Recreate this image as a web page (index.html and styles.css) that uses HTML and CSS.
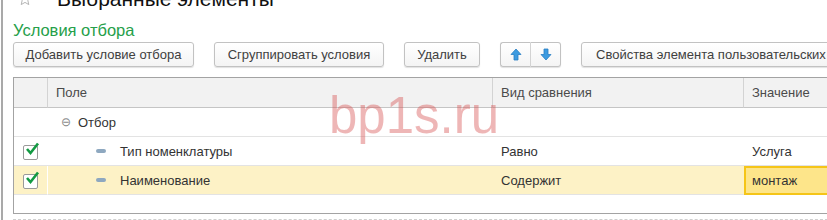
FILE: index.html
```html
<!DOCTYPE html>
<html lang="ru">
<head>
<meta charset="utf-8">
<link rel="stylesheet" href="styles.css">
</head>
<body>
<div class="frame">
  <div class="title-row">
    <svg class="star" width="14" height="14" viewBox="0 0 14 14"><path d="M7 1 L8.8 5 L13 5.4 L9.8 8.3 L10.8 12.6 L7 10.4 L3.2 12.6 L4.2 8.3 L1 5.4 L5.2 5 Z" fill="none" stroke="#b5b5b5" stroke-width="1"/></svg>
    <span class="title">Выбранные элементы</span>
  </div>
  <div class="group-title">Условия отбора</div>
  <div class="toolbar">
    <button class="btn b1">Добавить условие отбора</button>
    <button class="btn b2">Сгруппировать условия</button>
    <button class="btn b3">Удалить</button>
    <div class="btn-pair">
      <button class="btn half"><svg width="12" height="13" viewBox="0 0 12 13"><path d="M6 1 L11 6.5 L8 6.5 L8 12 L4 12 L4 6.5 L1 6.5 Z" fill="#3d9be0" stroke="#2a7fc4" stroke-width="0.8"/></svg></button>
      <button class="btn half"><svg width="12" height="13" viewBox="0 0 12 13"><path d="M6 12 L11 6.5 L8 6.5 L8 1 L4 1 L4 6.5 L1 6.5 Z" fill="#3d9be0" stroke="#2a7fc4" stroke-width="0.8"/></svg></button>
    </div>
    <button class="btn b5"><span class="b5-text">Свойства элемента пользовательских настроек</span></button>
  </div>
  <div class="grid">
    <div class="hc c0"></div>
    <div class="hc c1">Поле</div>
    <div class="hc c2">Вид сравнения</div>
    <div class="hc c3">Значение</div>

    <div class="cell c0"></div>
    <div class="cell c1 lvl0"><span class="collapse">⊖</span>Отбор</div>
    <div class="cell c2"></div>
    <div class="cell c3"></div>

    <div class="cell c0"><span class="chk"><svg width="16" height="14" viewBox="0 0 16 14"><path d="M3 7 L6.5 11 L14 1.5" fill="none" stroke="#139a43" stroke-width="2.6"/></svg></span></div>
    <div class="cell c1 lvl1"><span class="dash"></span>Тип номенклатуры</div>
    <div class="cell c2">Равно</div>
    <div class="cell c3">Услуга</div>

    <div class="cell c0 sel sel0"><span class="chk"><svg width="16" height="14" viewBox="0 0 16 14"><path d="M3 7 L6.5 11 L14 1.5" fill="none" stroke="#139a43" stroke-width="2.6"/></svg></span></div>
    <div class="cell c1 lvl1 sel"><span class="dash"></span>Наименование</div>
    <div class="cell c2 sel">Содержит</div>
    <div class="cell c3 sel cur">монтаж</div>

    <div class="blank"></div>
  </div>
  <div class="dashed"></div>
  <div class="watermark">bp1s.ru</div>
</div>
</body>
</html>
```
FILE: styles.css
```css
html, body {
  margin: 0;
  padding: 0;
  background: #fff;
  overflow: hidden;
  width: 827px;
  height: 220px;
}
.frame {
  position: relative;
  margin-left: 1px;
  border-left: 2px solid #a9a9a9;
  height: 220px;
  padding-left: 10px;
  font-family: Arial, "Liberation Sans", sans-serif;
  font-size: 13px;
  color: #404040;
  overflow: hidden;
}
.title-row {
  display: flex;
  align-items: center;
  height: 16px;
  margin-top: -9px;
  gap: 25px;
  padding-left: 5px;
}
.star { flex: none; }
.title {
  font-size: 21px;
  color: #111;
  line-height: 16px;
  white-space: nowrap;
}
.group-title {
  margin-top: 14px;
  font-size: 16.5px;
  line-height: 18px;
  color: #26a04a;
}
.toolbar {
  display: flex;
  margin-top: 3px;
  height: 25px;
  white-space: nowrap;
}
.btn {
  font-family: Arial, "Liberation Sans", sans-serif;
  font-size: 13px;
  color: #404040;
  height: 25px;
  border: 1px solid #c2c2c2;
  border-radius: 3px;
  background: linear-gradient(#ffffff, #f4f4f4);
  box-shadow: 0 1px 1px rgba(0,0,0,0.12);
  padding: 0;
  margin: 0;
  flex: none;
}
.b1 { width: 181px; }
.b2 { width: 170px; margin-left: 20px; }
.b3 { width: 76px; margin-left: 20px; }
.btn-pair {
  display: flex;
  margin-left: 20px;
  flex: none;
}
.half {
  width: 31px;
  display: flex;
  align-items: center;
  justify-content: center;
}
.half:first-child { border-radius: 3px 0 0 3px; border-right: 1px solid #d6d6d6; }
.half:last-child { border-radius: 0 3px 3px 0; border-left: none; width: 30px; }
.b5 { width: 300px; margin-left: 20px; text-align: left; padding-left: 14px; overflow: hidden; }
.grid {
  margin-top: 10px;
  display: grid;
  grid-template-columns: 34px 445px 251px 120px;
  grid-template-rows: 30px 29px 29px 29px 18px;
  border: 1px solid #a3a3a3;
  border-right: none;
  width: 850px;
  box-sizing: border-box;
}
.hc {
  background: #f2f2f2;
  border-right: 1px solid #d3d3d3;
  border-bottom: 1px solid #c5c5c5;
  display: flex;
  align-items: center;
  padding-left: 8px;
  color: #4a4a4a;
}
.hc.c0 { padding-left: 0; }
.cell {
  border-bottom: 1px solid #e3e3e3;
  display: flex;
  align-items: center;
  padding-left: 8px;
  color: #333;
  position: relative;
}
.cell.c0 { padding-left: 0; }
.lvl0 { padding-left: 13px; }
.lvl1 { padding-left: 48px; }
.collapse {
  color: #8a8a8a;
  font-size: 12px;
  width: 17px;
  display: inline-block;
}
.dash {
  width: 10px;
  height: 4px;
  border-radius: 2px;
  background: #8ea8c0;
  margin-right: 14px;
  flex: none;
}
.chk {
  position: relative;
  margin-left: 9px;
  width: 13px;
  height: 13px;
  border: 1px solid #9a9a9a;
  border-radius: 2px;
  background: #fff;
  margin-top: 2px;
}
.chk svg {
  position: absolute;
  left: 0;
  top: -4px;
}
.sel { background: #fdf2c6; }
.sel0 { border-right: 1px solid #fff; }
.cur {
  background: #fde58a;
  border: 2px solid #f5c518;
  padding-left: 6px;
}
.blank { grid-column: 1 / -1; }
.dashed {
  margin-top: 5px;
  border-top: 1px dashed #cfcfcf;
  width: 830px;
}
.watermark {
  position: absolute;
  left: 326px;
  top: 86px;
  font-family: Arial, "Liberation Sans", sans-serif;
  font-size: 51px;
  color: rgba(214, 80, 80, 0.42);
  pointer-events: none;
}
```
